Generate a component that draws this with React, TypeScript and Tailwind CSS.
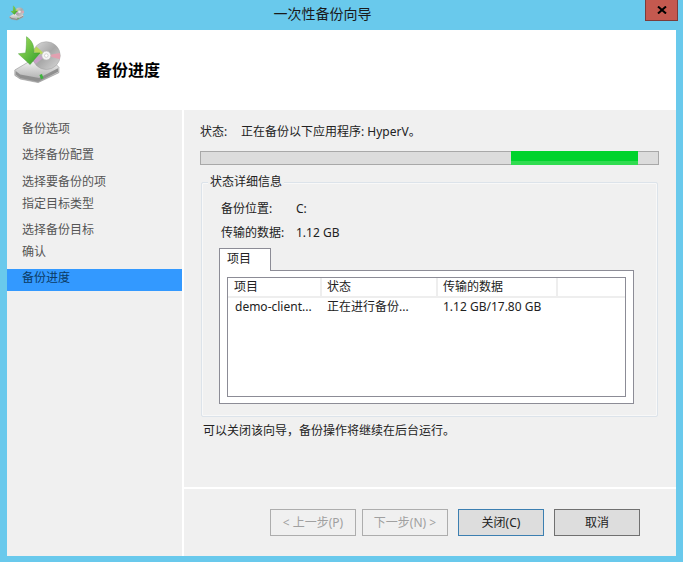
const font = { fontFamily: '"Noto Sans", "Noto Sans CJK SC", sans-serif' };

function BackupIcon({ size }: { size: number }) {
  return (
    <svg width={size} height={size} viewBox="0 0 60 60">
      <defs>
        <linearGradient id="ag" x1="0" y1="0" x2="1" y2="1">
          <stop offset="0" stopColor="#a6e05c" />
          <stop offset="1" stopColor="#2f9e2a" />
        </linearGradient>
        <linearGradient id="dg" x1="0" y1="0" x2="0" y2="1">
          <stop offset="0" stopColor="#f2f2f2" />
          <stop offset="1" stopColor="#a4a4a4" />
        </linearGradient>
        <linearGradient id="cd" x1="0" y1="0" x2="1" y2="1">
          <stop offset="0" stopColor="#dcdcdc" />
          <stop offset="0.5" stopColor="#a8a8a8" />
          <stop offset="1" stopColor="#d8d8d8" />
        </linearGradient>
      </defs>
      <path d="M2 40 L19 30 L46 32 L51 37 L51 43 L28 54 L8 50 L2 46 Z" fill="url(#dg)" stroke="#8a8a8a" strokeWidth="0.6" />
      <path d="M3 41 L8 45 L29 49 L50 38 L50 42 L28 53 L8 49 L3 45 Z" fill="#8f8f8f" />
      <rect x="30" y="45" width="3" height="5" fill="#3cb43c" transform="rotate(-20 31 47)" />
      <circle cx="37" cy="24" r="15.5" fill="url(#cd)" stroke="#9a9a9a" strokeWidth="0.5" />
      <path d="M37 24 L22.5 20 A15 15 0 0 1 26 14 Z" fill="#b8d85a" />
      <path d="M37 24 L22 26 A15 15 0 0 0 25 33 Z" fill="#c8a0c8" />
      <path d="M37 24 L52 21 A15 15 0 0 1 52 28 Z" fill="#e2a0b0" />
      <circle cx="37" cy="24" r="5" fill="#f4f4f4" stroke="#b8b8b8" strokeWidth="0.8" />
      <circle cx="37" cy="24" r="2" fill="#ffffff" stroke="#a8a8a8" strokeWidth="0.5" />
      <path d="M15 3 C21 7 24 13 23 21 L30 21 L19 34 L6 22 L14 21 C15 15 15 9 15 3 Z" fill="url(#ag)" stroke="#3d9a2c" strokeWidth="0.5" />
    </svg>
  );
}

function NavItem({ label, className = "", active = false }: { label: string; className?: string; active?: boolean }) {
  return (
    <div className={`pl-[15px] h-[22px] leading-[18px] text-[12px] ${active ? "bg-[#3399ff] text-[#0b3b66]" : "text-[#555555]"} ${className}`}>
      {label}
    </div>
  );
}

function WizardButton({ label, className }: { label: string; className: string }) {
  return (
    <div className={`w-[86px] h-[27px] border flex items-center justify-center text-[12px] ${className}`}>{label}</div>
  );
}

export default function App() {
  return (
    <div style={font} className="w-[683px] h-[562px] bg-[#69c9ec] flex flex-col overflow-hidden text-[12px] text-[#222222]">
      <div className="h-[30px] flex items-start relative shrink-0">
        <div className="ml-[9px] mt-[5px]"><BackupIcon size={17} /></div>
        <div className="flex-1 text-center text-[14px] leading-[20px] mt-[4px] text-[#1a1a1a] pr-[26px]">一次性备份向导</div>
        <div className="w-[33px] h-[21px] mr-[5px] bg-[#c4594f] border border-[#7c3c3a] border-t-0 flex items-center justify-center">
          <svg width="10" height="8" viewBox="0 0 10 8">
            <path d="M1 0.5 L9 7.5 M9 0.5 L1 7.5" stroke="#000" strokeWidth="2" />
          </svg>
        </div>
      </div>

      <div className="mx-[7px] w-[669px] h-[526px] flex flex-col bg-white">
        <div className="h-[80px] flex items-start shrink-0">
          <div className="ml-[6px] mt-[4px]"><BackupIcon size={54} /></div>
          <div className="ml-[29px] mt-[28px] text-[16px] leading-[24px] font-bold text-black">备份进度</div>
        </div>

        <div className="flex-1 flex gap-[2px] min-h-0">
          <div className="w-[175px] bg-[#f0f0f0] pt-[10px]">
            <NavItem label="备份选项" />
            <NavItem label="选择备份配置" className="mt-[4px]" />
            <NavItem label="选择要备份的项" className="mt-[5px]" />
            <NavItem label="指定目标类型" />
            <NavItem label="选择备份目标" className="mt-[4px]" />
            <NavItem label="确认" />
            <NavItem label="备份进度" active className="mt-[4px]" />
          </div>

          <div className="flex-1 bg-[#f0f0f0] flex flex-col">
            <div className="h-[377px] pl-[16px] pr-[17px] pt-[13px]">
              <div className="flex leading-[18px] h-[18px]">
                <span className="w-[41px]">状态:</span>
                <span>正在备份以下应用程序: HyperV。</span>
              </div>
              <div className="mt-[10px] h-[14px] w-[459px] bg-[#dcdcdc] border border-[#a8a8a8] pl-[310px]">
                <div className="h-[14px] -mt-px w-[127px] bg-[linear-gradient(#00d32c_0,#00d32c_70%,#30dc50_75%,#30dc50_100%)]" />
              </div>
              <div className="relative mt-[17px] ml-px w-[457px] h-[235px] border border-[#dce3ea] rounded-[2px] shadow-[inset_0_0_0_1px_#f8f8f8] px-[16px]">
                <div className="absolute left-[6px] -top-[9px] bg-[#f0f0f0] px-[2px] leading-[16px]">状态详细信息</div>
                <div className="flex mt-[17px] h-[18px] leading-[18px]">
                  <span className="w-[78px] pl-[3px]">备份位置:</span><span>C:</span>
                </div>
                <div className="flex mt-[6px] h-[18px] leading-[18px]">
                  <span className="w-[78px] pl-[3px]">传输的数据:</span><span>1.12 GB</span>
                </div>
                <div className="mt-[6px] ml-px w-[52px] h-[23px] border border-[#8c8c96] border-b-0 bg-white relative z-10 pl-[7px] leading-[20px]">项目</div>
                <div className="-mt-px ml-px w-[415px] h-[134px] border border-[#8c8c96] bg-white p-[6px] pl-[7px]">
                  <div className="w-[399px] h-[120px] border border-[#8c8c96] bg-white">
                    <div className="flex h-[20px] border-b-2 border-[#eeeeee] leading-[18px]">
                      <div className="w-[94px] pl-[6px] border-r-2 border-[#eeeeee]">项目</div>
                      <div className="w-[116px] pl-[5px] border-r-2 border-[#eeeeee]">状态</div>
                      <div className="w-[120px] pl-[5px] border-r-2 border-[#eeeeee]">传输的数据</div>
                    </div>
                    <div className="flex h-[20px] leading-[18px]">
                      <div className="w-[94px] pl-[7px]">demo-client...</div>
                      <div className="w-[116px] pl-[5px]">正在进行备份...</div>
                      <div className="w-[120px] pl-[5px]">1.12 GB/17.80 GB</div>
                    </div>
                  </div>
                </div>
              </div>
              <div className="mt-[5px] ml-[3px] leading-[18px]">可以关闭该向导，备份操作将继续在后台运行。</div>
            </div>
            <div className="h-[2px] bg-white" />
            <div className="flex-1 flex items-start pl-[86px] pt-[20px]">
              <WizardButton label="< 上一步(P)" className="border-[#adadad] text-[#a0a0a0]" />
              <WizardButton label="下一步(N) >" className="ml-[6px] border-[#adadad] text-[#a0a0a0]" />
              <WizardButton label="关闭(C)" className="ml-[10px] border-[#3c7fb1] bg-[#dddddd]" />
              <WizardButton label="取消" className="ml-[10px] border-[#707070] bg-[#dddddd]" />
            </div>
          </div>
        </div>
      </div>
    </div>
  );
}
